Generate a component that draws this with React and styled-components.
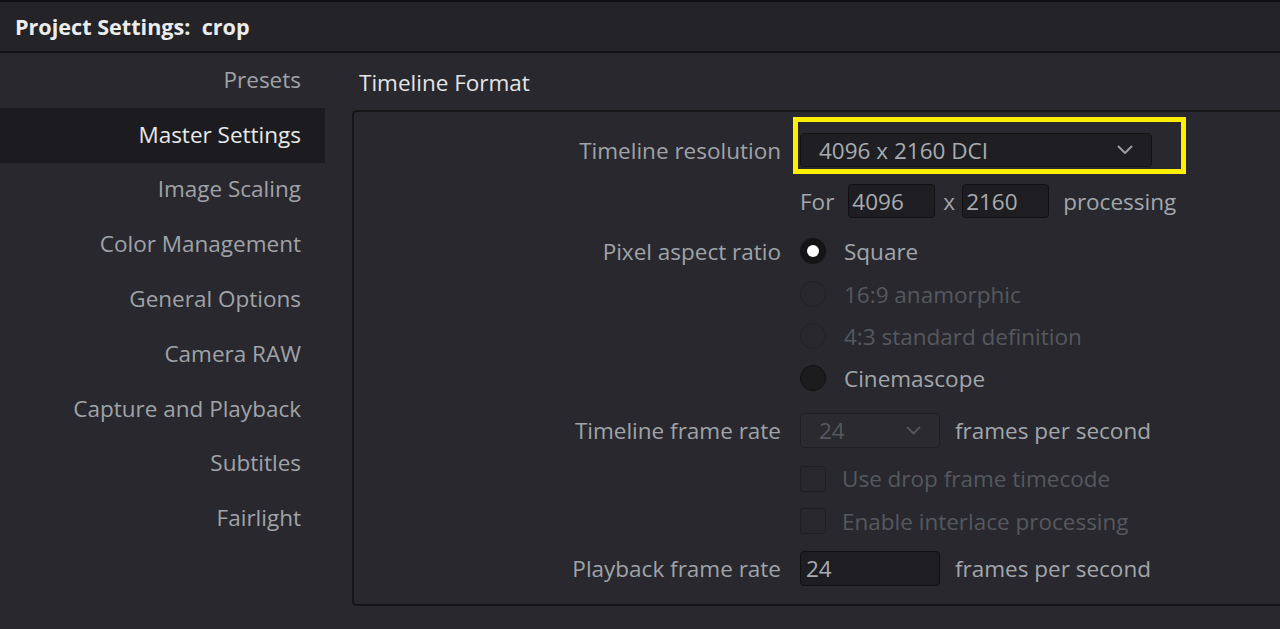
import React from "react";
import styled, { createGlobalStyle, css } from "styled-components";

const Global = createGlobalStyle`
  html, body { margin: 0; padding: 0; background: #28282e; }
  body { font-family: "Open Sans", "Noto Sans", sans-serif; -webkit-font-smoothing: antialiased; }
  #root { width: 1280px; height: 629px; overflow: hidden; }
`;

const FS = "22.5px";

const Window = styled.div`
  width: 1280px;
  height: 629px;
  display: flex;
  flex-direction: column;
  background: #28282e;
`;

const TitleBar = styled.div`
  height: 49px;
  border-top: 2px solid #111113;
  border-bottom: 2px solid #141417;
  background: #232328;
  display: flex;
  align-items: center;
  padding-left: 15px;
  color: #ececec;
  font-size: 21.6px;
  font-weight: 700;
  white-space: pre;
`;

const Body = styled.div`
  flex: 1;
  display: flex;
`;

const Sidebar = styled.nav`
  width: 325px;
  display: flex;
  flex-direction: column;
`;

const NavItem = styled.div`
  height: 54.8px;
  box-sizing: border-box;
  display: flex;
  align-items: center;
  justify-content: flex-end;
  padding-right: 24px;
  padding-bottom: 2px;
  font-size: ${FS};
  color: ${(p) => (p.$active ? "#e8e8e8" : "#a0a3a8")};
  background: ${(p) => (p.$active ? "#1c1c20" : "transparent")};
`;

const Main = styled.section`
  flex: 1;
  padding-left: 27px;
  display: flex;
  flex-direction: column;
`;

const Heading = styled.div`
  height: 57px;
  display: flex;
  align-items: center;
  padding-left: 7px;
  padding-top: 2px;
  box-sizing: border-box;
  font-size: ${FS};
  color: #e4e4e4;
`;

const Panel = styled.div`
  height: 496px;
  box-sizing: border-box;
  border: 2px solid #151518;
  border-right: none;
  border-radius: 5px 0 0 5px;
  padding-top: 13px;
  display: flex;
  flex-direction: column;
`;

const Row = styled.div`
  height: ${(p) => p.$h}px;
  display: grid;
  grid-template-columns: 427px 1fr;
  column-gap: 19px;
  align-items: center;
`;

const Label = styled.div`
  text-align: right;
  font-size: ${FS};
  color: #a0a3a8;
  white-space: nowrap;
`;

const Controls = styled.div`
  display: flex;
  align-items: center;
  font-size: ${FS};
  color: ${(p) => (p.$disabled ? "#56585d" : "#a3a6ab")};
  white-space: nowrap;
`;

const SelectWrap = styled.div`
  position: relative;
`;

const Select = styled.div`
  box-sizing: border-box;
  width: ${(p) => p.$w}px;
  height: ${(p) => p.$hgt}px;
  border-radius: 4px;
  display: flex;
  align-items: center;
  justify-content: space-between;
  padding: 0 18px 0 18px;
  font-size: ${FS};
  ${(p) =>
    p.$disabled
      ? css`
          background: #2a2a2f;
          border: 1px solid #1f1f23;
          color: #56585d;
        `
      : css`
          background: #1f1f23;
          border: 1px solid #121214;
          color: #a8abb0;
        `}
`;

const Highlight = styled.div`
  position: absolute;
  left: -7px;
  top: -16px;
  right: -34px;
  bottom: -7px;
  border: 5px solid #ffef00;
  pointer-events: none;
`;

const Input = styled.div`
  box-sizing: border-box;
  width: ${(p) => p.$w}px;
  height: ${(p) => p.$hgt}px;
  background: #1e1e22;
  border: 1px solid #111113;
  border-radius: 4px;
  display: flex;
  align-items: center;
  padding-left: ${(p) => p.$pl}px;
  font-size: ${FS};
  color: #a8abb0;
`;

const Spaced = styled.span`
  margin-left: ${(p) => p.$ml || 0}px;
  display: inline-flex;
`;

const Radio = styled.span`
  box-sizing: border-box;
  width: 26px;
  height: 26px;
  border-radius: 50%;
  flex: none;
  display: flex;
  align-items: center;
  justify-content: center;
  ${(p) =>
    p.$state === "checked"
      ? css`
          background: #141416;
          &::after {
            content: "";
            width: 12px;
            height: 12px;
            border-radius: 50%;
            background: #ffffff;
          }
        `
      : p.$state === "disabled"
      ? css`
          background: #29292d;
          border: 1px solid #222226;
        `
      : css`
          background: #1c1c1f;
          border: 1px solid #111113;
        `}
`;

const Checkbox = styled.span`
  box-sizing: border-box;
  width: 26px;
  height: 26px;
  flex: none;
  border-radius: 3px;
  background: #29292d;
  border: 1px solid #1f1f23;
`;

const Chevron = ({ color, size = 16 }) => (
  <svg width={size} height={size * 0.6} viewBox="0 0 16 9.6" fill="none">
    <path d="M1.5 1.5 L8 8 L14.5 1.5" stroke={color} strokeWidth="2" strokeLinecap="round" strokeLinejoin="round" />
  </svg>
);

const navItems = [
  "Presets",
  "Master Settings",
  "Image Scaling",
  "Color Management",
  "General Options",
  "Camera RAW",
  "Capture and Playback",
  "Subtitles",
  "Fairlight",
];

export default function App() {
  return (
    <>
      <Global />
      <Window>
        <TitleBar>{"Project Settings:  crop"}</TitleBar>
        <Body>
          <Sidebar>
            {navItems.map((n) => (
              <NavItem key={n} $active={n === "Master Settings"}>
                {n}
              </NavItem>
            ))}
          </Sidebar>
          <Main>
            <Heading>Timeline Format</Heading>
            <Panel>
              <Row $h={50}>
                <Label>Timeline resolution</Label>
                <Controls>
                  <SelectWrap>
                    <Select $w={352} $hgt={34}>
                      <span>4096 x 2160 DCI</span>
                      <Chevron color="#9c9ea2" />
                    </Select>
                    <Highlight />
                  </SelectWrap>
                </Controls>
              </Row>
              <Row $h={52}>
                <div />
                <Controls>
                  <span>For</span>
                  <Spaced $ml={14}>
                    <Input $w={87} $hgt={34} $pl={3}>4096</Input>
                  </Spaced>
                  <Spaced $ml={8}>x</Spaced>
                  <Spaced $ml={7}>
                    <Input $w={87} $hgt={34} $pl={3}>2160</Input>
                  </Spaced>
                  <Spaced $ml={14}>processing</Spaced>
                </Controls>
              </Row>
              <Row $h={48}>
                <Label>Pixel aspect ratio</Label>
                <Controls>
                  <Radio $state="checked" />
                  <Spaced $ml={18}>Square</Spaced>
                </Controls>
              </Row>
              <Row $h={38}>
                <div />
                <Controls $disabled>
                  <Radio $state="disabled" />
                  <Spaced $ml={18}>16:9 anamorphic</Spaced>
                </Controls>
              </Row>
              <Row $h={46}>
                <div />
                <Controls $disabled>
                  <Radio $state="disabled" />
                  <Spaced $ml={18}>4:3 standard definition</Spaced>
                </Controls>
              </Row>
              <Row $h={38}>
                <div />
                <Controls>
                  <Radio $state="off" />
                  <Spaced $ml={18}>Cinemascope</Spaced>
                </Controls>
              </Row>
              <Row $h={66}>
                <Label>Timeline frame rate</Label>
                <Controls>
                  <Select $w={140} $hgt={35} $disabled>
                    <span>24</span>
                    <Chevron color="#55575c" size={15} />
                  </Select>
                  <Spaced $ml={15}>frames per second</Spaced>
                </Controls>
              </Row>
              <Row $h={28}>
                <div />
                <Controls $disabled>
                  <Checkbox />
                  <Spaced $ml={16}>Use drop frame timecode</Spaced>
                </Controls>
              </Row>
              <Row $h={60}>
                <div />
                <Controls $disabled>
                  <Checkbox />
                  <Spaced $ml={16}>Enable interlace processing</Spaced>
                </Controls>
              </Row>
              <Row $h={32}>
                <Label>Playback frame rate</Label>
                <Controls>
                  <Input $w={140} $hgt={35} $pl={5}>24</Input>
                  <Spaced $ml={15}>frames per second</Spaced>
                </Controls>
              </Row>
            </Panel>
          </Main>
        </Body>
      </Window>
    </>
  );
}
